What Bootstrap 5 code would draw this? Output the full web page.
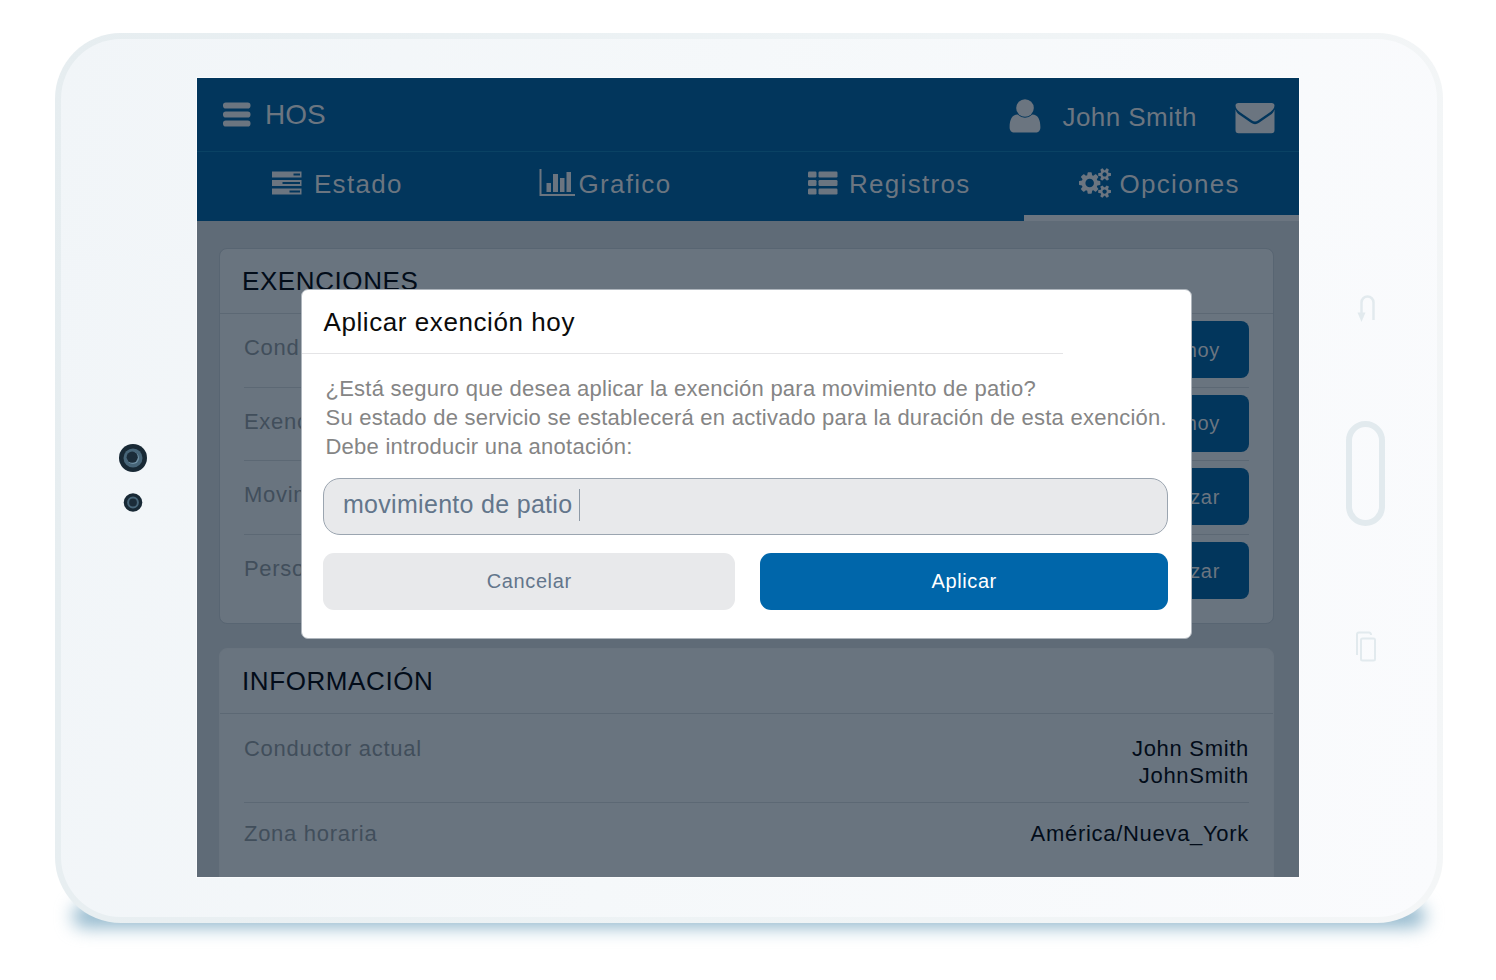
<!DOCTYPE html>
<html lang="es">
<head>
  <meta charset="UTF-8" />
  <title>HOS - Opciones</title>
  <meta name="viewport" content="width=device-width, initial-scale=1" />
  <link href="https://cdn.jsdelivr.net/npm/bootstrap@5.3.3/dist/css/bootstrap.min.css" rel="stylesheet" />
  <style>
    body {
      font-family: "Liberation Sans", Arial, sans-serif;
      background-color: #fff;
      height: 980px;
      overflow: hidden;
      padding: 33px 53px 57px 55px;
    }

    svg {
      display: block;
      flex-shrink: 0;
    }

    /* tablet */
    .tablet {
      height: 890px;
      border: 6px solid transparent;
      border-radius: 66px;
      background:
        linear-gradient(100deg, #f1f5f8 0%, #f5f8fa 45%, #fafbfd 100%) padding-box,
        linear-gradient(100deg, #e6edf0 0%, #eef3f5 50%, #f4f6f7 100%) border-box;
    }

    /* soft shadow on the table, under the lower edge */
    .tablet::after {
      content: "";
      position: absolute;
      left: 12px;
      right: 12px;
      bottom: -10px;
      height: 22px;
      border-radius: 50% / 11px;
      border-radius: 11px;
      background-color: #8cb4ca;
      filter: blur(9px);
      z-index: -1;
    }

    .bezel-left {
      width: 136px;
      padding: 405px 0 0 57px;
    }

    .bezel-right {
      width: 138px;
      padding: 255px 0 0 46px;
    }

    .home-key {
      width: 39px;
      height: 105px;
      border: 6px solid #e2eaee;
      border-radius: 20px;
      margin: 99px 0 104px 1px;
    }

    .bezel-right svg {
      margin-left: 1px;
    }

    .screen {
      width: 1102.5px;
      height: 799px;
      margin-top: 39px;
      background-color: #5f6b77;
      box-shadow: 0 0 0 1px rgba(255, 255, 255, .6);
      color: #6b7580;
    }

    /* top bars */
    .topbar {
      height: 74px;
      background-color: #02365c;
      border-bottom: 1px solid #0a4264;
      padding: 0 24px 0 26px;
    }

    .brand {
      margin: 1px 0 0 14px;
      font-size: 28px;
      line-height: 32px;
    }

    .user-icon {
      margin-top: 2px;
    }

    .user-name {
      margin: 4px 38px 0 21px;
      font-size: 26px;
      letter-spacing: .45px;
      line-height: 30px;
    }

    .mail-icon {
      margin-top: 6px;
    }

    .tabs {
      height: 69px;
      background-color: #02365c;
      font-size: 26px;
      letter-spacing: 1.3px;
      line-height: 30px;
    }

    .tab {
      padding-bottom: 2px;
      border-bottom: 6px solid transparent;
    }

    .tab.current {
      border-bottom-color: #6b7580;
    }

    .tab-text {
      margin: 2px 0 0 12px;
    }

    .tab-estado { padding-left: 75px; }
    .tab-grafico { padding-left: 67px; }
    .tab-registros { padding-left: 60px; }
    .tab-opciones { padding-left: 55px; }
    .tab-grafico .tab-text { margin-left: 2px; }
    .tab-registros .tab-text { margin-left: 11px; }
    .tab-opciones .tab-text { margin-left: 9px; }

    /* panels */
    .panel {
      margin: 0 25px 0 22px;
      background-color: #69747f;
      border: 1px solid #586572;
      border-radius: 8px;
      font-size: 22px;
      letter-spacing: .72px;
    }

    .panel-exenciones {
      height: 376px;
      margin-top: 27px;
      margin-bottom: 24px;
    }

    .panel-info {
      height: 240px;
      border-color: #68737e;
    }

    .panel-title {
      height: 65px;
      padding: 0 22px 0 22px;
      border-bottom: 1px solid #5c6874;
      color: #020c19;
      font-size: 26px;
      letter-spacing: .6px;
    }

    .panel-line {
      height: 73.5px;
      margin: 0 24px;
      border-bottom: 1px solid #5c6874;
      color: #414e5b;
    }

    .panel-exenciones .panel-line {
      padding-bottom: 1px;
    }

    .panel-line:last-child {
      border-bottom: 0;
    }

    .panel-line .label {
      margin-top: -4px;
    }

    .row-btn {
      width: 156px;
      height: 57px;
      border-radius: 8px;
      padding: 0 28px;
      background-color: #02365c;
      color: #6b7580;
      font-size: 20px;
      letter-spacing: .7px;
    }

    .line-driver {
      height: 89px;
      padding-top: 21px;
      line-height: 27px;
    }

    .line-zone {
      height: 90px;
      padding-top: 17px;
      line-height: 27px;
    }

    .value {
      color: #020c19;
      letter-spacing: .7px;
    }

    /* dialog over the page */
    .dialog {
      position: absolute;
      left: 104px;
      top: 211px;
      width: 891px;
      height: 350px;
      background-color: #fff;
      border: 1px solid #aeb5bc;
      border-radius: 7px;
      color: #858585;
    }

    .dialog-title {
      width: 761px;
      height: 64px;
      padding: 2px 0 0 21.5px;
      border-bottom: 1px solid #e4e4e6;
      color: #0b0b0b;
      font-size: 26px;
      letter-spacing: .58px;
    }

    .dialog-text {
      padding: 21.4px 0 0 23.5px;
      font-size: 22px;
      line-height: 28.7px;
      letter-spacing: .25px;
      white-space: nowrap;
    }

    .note-field {
      height: 57px;
      margin: 16.5px 23px 0 21px;
      padding: 0 0 4px 19px;
      background-color: #e8e9eb;
      border: 1px solid #9ba5b0;
      border-radius: 17px;
      color: #63768b;
      font-size: 25px;
      letter-spacing: .3px;
    }

    .caret {
      width: 1px;
      height: 32px;
      margin-left: 7px;
      background-color: #8d99a6;
    }

    .dialog-actions {
      margin: 18px 23px 0 21px;
      gap: 25px;
    }

    .dialog-btn {
      height: 57px;
      padding: 0 0 1px;
      border: 0;
      border-radius: 11px;
      font-size: 20px;
      letter-spacing: .6px;
    }

    .btn-cancel {
      width: 413px;
      background-color: #e8e9eb;
      color: #63768b;
    }

    .btn-apply {
      width: 408px;
      background-color: #0066aa;
      color: #fff;
    }
  </style>
</head>
<body>

  <div class="tablet position-relative d-flex">

    <div class="bezel-left">
      <svg width="30" height="76" viewBox="0 0 30 76">
        <circle cx="15" cy="14" r="14" fill="#182935" />
        <circle cx="15" cy="14" r="9.5" fill="#476578" />
        <circle cx="15" cy="14" r="6" fill="#6f90a4" />
        <circle cx="14.200" cy="13.200" r="5.600" fill="#1b2c39" />
        <circle cx="15" cy="58.500" r="9.300" fill="#182935" />
        <circle cx="15" cy="58.500" r="4.900" fill="#1b2c39" stroke="#476578" stroke-width="2" />
      </svg>
    </div>

    <div class="screen position-relative overflow-hidden">

      <div class="topbar d-flex align-items-center">
        <svg width="28" height="26" viewBox="0 0 28 26" fill="currentColor">
          <rect y=".5" width="27.500" height="6" rx="2.800" />
          <rect y="9.500" width="27.500" height="6" rx="2.800" />
          <rect y="18.500" width="27.500" height="6" rx="2.800" />
        </svg>
        <span class="brand me-auto">HOS</span>
        <svg class="user-icon" width="32" height="36" viewBox="0 0 32 36" fill="currentColor">
          <circle cx="16" cy="10" r="8.800" />
          <path d="M8.600 16.600Q12 19.800 16 19.800T23.400 16.600C29 16.600 31.400 22 31.400 29.200C31.400 32.400 29.600 34.600 26.600 34.600H5.400C2.400 34.600 .6 32.400 .6 29.200C.6 22 3 16.600 8.600 16.600Z" />
        </svg>
        <span class="user-name">John Smith</span>
        <svg class="mail-icon" width="40" height="32" viewBox="0 0 40 32" fill="currentColor">
          <path d="M3.500 1H36.500Q39.500 1 39.500 3.600C39.500 6.500 37.500 8.500 35 10.200L23 18.400Q20 20.500 17 18.400L5 10.200C2.500 8.500 .5 6.500 .5 3.600Q.5 1 3.500 1Z" />
          <path d="M.5 7.500Q1.500 10.500 3 11.800L16 20.800Q20 23.500 24 20.800L37 11.800Q38.500 10.500 39.500 7.500V28Q39.500 31.200 36.500 31.200H3.500Q.5 31.200 .5 28Z" />
        </svg>
      </div>

      <div class="tabs row g-0">
        <div class="tab tab-estado col-3 d-flex align-items-center">
          <svg width="30" height="24" viewBox="0 0 30 24" fill="currentColor" fill-rule="evenodd">
            <path d="M0 .5H29.500V6.500H0ZM21.500 2.500V4.500H28V2.500Z" />
            <path d="M0 9H29.500V15H0ZM10.500 11V13H28V11Z" />
            <path d="M0 17.500H29.500V23.500H0ZM17.500 19.500V21.500H28V19.500Z" />
          </svg>
          <span class="tab-text">Estado</span>
        </div>
        <div class="tab tab-grafico col-3 d-flex align-items-center">
          <svg width="37" height="28" viewBox="0 0 37 28" fill="currentColor">
            <path d="M.5 0H2.500V25H36V27H.5Z" />
            <path d="M7.500 14H12V23H7.500ZM14 5H19V23H14ZM21 9H25.500V23H21ZM27.500 3H32V23H27.500Z" />
          </svg>
          <span class="tab-text">Grafico</span>
        </div>
        <div class="tab tab-registros col-3 d-flex align-items-center">
          <svg width="30" height="24" viewBox="0 0 30 24" fill="currentColor">
            <rect y=".5" width="8.500" height="6" rx="1.200" />
            <rect x="10.500" y=".5" width="19" height="6" rx="1.200" />
            <rect y="9" width="8.500" height="6" rx="1.200" />
            <rect x="10.500" y="9" width="19" height="6" rx="1.200" />
            <rect y="17.500" width="8.500" height="6" rx="1.200" />
            <rect x="10.500" y="17.500" width="19" height="6" rx="1.200" />
          </svg>
          <span class="tab-text">Registros</span>
        </div>
        <div class="tab tab-opciones current col-3 d-flex align-items-center">
          <svg width="32" height="30" viewBox="0 0 1920 1792" fill="currentColor">
            <path d="M896 896q0-106-75-181t-181-75-181 75-75 181 75 181 181 75 181-75 75-181zm768 512q0-52-38-90t-90-38-90 38-38 90q0 53 37.500 90.500t90.500 37.500 90.500-37.500 37.500-90.500zm0-1024q0-52-38-90t-90-38-90 38-38 90q0 53 37.500 90.500t90.500 37.500 90.500-37.500 37.500-90.500zm-384 421v185q0 10-7 19.500t-16 10.500l-155 24q-11 35-32 76 34 48 90 115 7 11 7 20 0 12-7 19-23 30-82.500 89.500t-78.500 59.500q-11 0-21-7l-115-90q-37 19-77 31-11 108-23 155-7 24-30 24h-186q-11 0-20-7.500t-10-17.500l-23-153q-34-10-75-31l-118 89q-7 7-20 7-11 0-21-8-144-133-144-160 0-9 7-19 10-14 41-53t47-61q-23-44-35-82l-152-24q-10-1-17-9.500t-7-19.500v-185q0-10 7-19.500t16-10.500l155-24q11-35 32-76-34-48-90-115-7-11-7-20 0-12 7-20 22-30 82-89t79-59q11 0 21 7l115 90q34-18 77-32 11-108 23-154 7-24 30-24h186q11 0 20 7.500t10 17.500l23 153q34 10 75 31l118-89q8-7 20-7 11 0 21 8 144 133 144 160 0 8-7 19-12 16-42 54t-45 60q23 48 34 82l152 23q10 2 17 10.500t7 19.500zm640 533v140q0 16-149 31-12 27-30 52 51 113 51 138 0 4-4 7-122 71-124 71-8 0-46-47t-52-68q-20 2-30 2t-30-2q-14 21-52 68t-46 47q-2 0-124-71-4-3-4-7 0-25 51-138-18-25-30-52-149-15-149-31v-140q0-16 149-31 13-29 30-52-51-113-51-138 0-4 4-7 4-2 35-20t59-34 30-16q8 0 46 46.500t52 67.500q20-2 30-2t30 2q51-71 92-112l6-2q4 0 124 70 4 3 4 7 0 25-51 138 17 23 30 52 149 15 149 31zm0-1024v140q0 16-149 31-12 27-30 52 51 113 51 138 0 4-4 7-122 71-124 71-8 0-46-47t-52-68q-20 2-30 2t-30-2q-14 21-52 68t-46 47q-2 0-124-71-4-3-4-7 0-25 51-138-18-25-30-52-149-15-149-31v-140q0-16 149-31 13-29 30-52-51-113-51-138 0-4 4-7 4-2 35-20t59-34 30-16q8 0 46 46.500t52 67.500q20-2 30-2t30 2q51-71 92-112l6-2q4 0 124 70 4 3 4 7 0 25-51 138 17 23 30 52 149 15 149 31z" />
          </svg>
          <span class="tab-text">Opciones</span>
        </div>
      </div>

      <div class="panel panel-exenciones">
        <div class="panel-title d-flex align-items-center">EXENCIONES</div>
        <div class="panel-line d-flex align-items-center justify-content-between">
          <span class="label">Cond.</span>
          <button class="btn row-btn text-end">hoy</button>
        </div>
        <div class="panel-line d-flex align-items-center justify-content-between">
          <span class="label">Exenc.</span>
          <button class="btn row-btn text-end">hoy</button>
        </div>
        <div class="panel-line d-flex align-items-center justify-content-between">
          <span class="label">Movim.</span>
          <button class="btn row-btn text-end">zar</button>
        </div>
        <div class="panel-line d-flex align-items-center justify-content-between">
          <span class="label">Perso</span>
          <button class="btn row-btn text-end">zar</button>
        </div>
      </div>

      <div class="panel panel-info">
        <div class="panel-title d-flex align-items-center">INFORMACIÓN</div>
        <div class="panel-line line-driver d-flex justify-content-between">
          <span>Conductor actual</span>
          <span class="value text-end">John Smith<br>JohnSmith</span>
        </div>
        <div class="panel-line line-zone d-flex justify-content-between">
          <span>Zona horaria</span>
          <span class="value text-end">América/Nueva_York</span>
        </div>
      </div>

      <div class="dialog" role="dialog">
        <div class="dialog-title d-flex align-items-center">Aplicar exención hoy</div>
        <div class="dialog-text">
          ¿Está seguro que desea aplicar la exención para movimiento de patio?<br>
          Su estado de servicio se establecerá en activado para la duración de esta exención.<br>
          Debe introducir una anotación:
        </div>
        <div class="note-field d-flex align-items-center">
          <span>movimiento de patio</span>
          <span class="caret"></span>
        </div>
        <div class="dialog-actions d-flex">
          <button class="btn dialog-btn btn-cancel">Cancelar</button>
          <button class="btn dialog-btn btn-apply">Aplicar</button>
        </div>
      </div>

    </div>

    <div class="bezel-right">
      <svg width="40" height="28" viewBox="0 0 40 28">
        <path d="M15.500 19V8.500A6 6 0 0 1 27.500 8.500V26" fill="none" stroke="#e2eaee" stroke-width="2.500" />
        <path d="M11.500 18.500H19.500L15.500 28Z" fill="#e2eaee" />
      </svg>
      <div class="home-key"></div>
      <svg width="40" height="32" viewBox="0 0 40 32" fill="none" stroke="#e2eaee" stroke-width="2">
        <path d="M11 25V4.500Q11 2.500 13 2.500H23Q25 2.500 25 5" />
        <rect x="15" y="8.500" width="14" height="22" rx="1.500" />
      </svg>
    </div>

  </div>

  <script src="https://cdn.jsdelivr.net/npm/bootstrap@5.3.3/dist/js/bootstrap.bundle.min.js"></script>
</body>
</html>
